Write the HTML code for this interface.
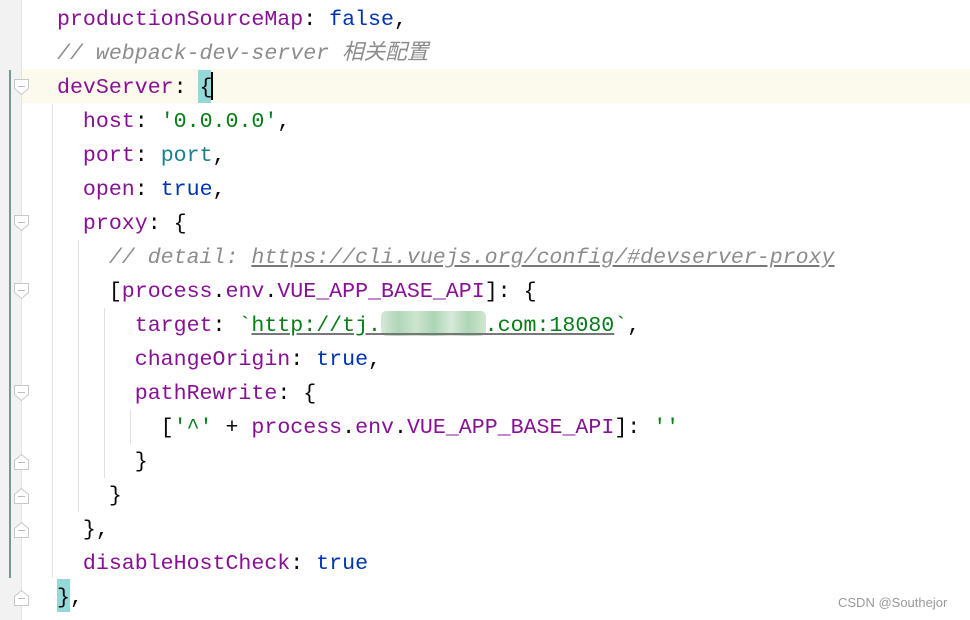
<!DOCTYPE html>
<html><head><meta charset="utf-8"><style>
body{margin:0;width:970px;height:620px;background:#fff;position:relative;overflow:hidden;font-family:"Liberation Mono","Noto Sans CJK SC",monospace;}
.g{position:absolute;left:0;top:0;width:21px;height:620px;background:#f2f2f2;border-right:1px solid #e4e4e4;}
.cl{position:absolute;left:22px;right:0;top:69px;height:34px;background:#fcfaed;}
.code{position:absolute;left:57px;top:3px;font-size:21.6px;line-height:34px;white-space:pre;color:#080808;}
.p{color:#871094}.c{color:#8c8c8c;font-style:italic}.k{color:#0033b3}.s{color:#067d17}.v{color:#1a7f8e}
.u{text-decoration:underline;text-decoration-color:#777}
.ig{position:absolute;width:1px;background:#e0e0e0}
.wm{position:absolute;left:838px;top:595px;font-family:"Liberation Sans",sans-serif;font-size:13px;color:#9a9a9a}
</style></head><body>
<div class="g"></div>
<div class="cl"></div>
<div style="position:absolute;left:9px;top:70px;width:2px;height:508px;background:#6f9a8f"></div>
<div class="ig" style="left:52px;top:104px;height:474px"></div>
<div class="ig" style="left:78px;top:240px;height:272px"></div>
<div class="ig" style="left:104px;top:308px;height:170px"></div>
<div class="ig" style="left:130px;top:410px;height:34px"></div>
<svg style="position:absolute;left:0;top:0" width="30" height="620">
<g fill="#fff" stroke="#c8c8c8" stroke-width="1">
<path d="M14.5 79.5h14v9l-7 6l-7-6z"/><path d="M14.5 215.5h14v9l-7 6l-7-6z"/><path d="M14.5 283.5h14v9l-7 6l-7-6z"/><path d="M14.5 385.5h14v9l-7 6l-7-6z"/>
<path d="M14.5 469.5h14v-9l-7-6l-7 6z"/><path d="M14.5 503.5h14v-9l-7-6l-7 6z"/><path d="M14.5 537.5h14v-9l-7-6l-7 6z"/><path d="M14.5 605.5h14v-9l-7-6l-7 6z"/>
</g>
<g stroke="#bbb"><path d="M18 86.5h7M18 222.5h7M18 290.5h7M18 392.5h7M18 462.5h7M18 496.5h7M18 530.5h7M18 598.5h7"/></g>
</svg>
<div style="position:absolute;left:198px;top:70px;width:13px;height:33px;background:#93d9d9"></div>
<div style="position:absolute;left:211px;top:72px;width:2px;height:28px;background:#000"></div>
<div style="position:absolute;left:57px;top:579px;width:13px;height:33px;background:#93d9d9"></div>
<div style="position:absolute;left:381px;top:311px;width:105px;height:25px;background:linear-gradient(90deg,#cfe6d3,#a9d1b0,#c7e2cb,#a3cfac,#d2e7d5,#a6d0ae,#cbe4ce);border-radius:5px;opacity:.9"></div>
<div class="code"><span class="p">productionSourceMap</span>: <span class="k">false</span>,
<span class="c">// webpack-dev-server 相关配置</span>
<span class="p">devServer</span>: {
  <span class="p">host</span>: <span class="s">'0.0.0.0'</span>,
  <span class="p">port</span>: <span class="v">port</span>,
  <span class="p">open</span>: <span class="k">true</span>,
  <span class="p">proxy</span>: {
    <span class="c">// detail: <span class="u">https://cli.vuejs.org/config/#devserver-proxy</span></span>
    [<span class="p">process</span>.<span class="p">env</span>.<span class="p">VUE_APP_BASE_API</span>]: {
      <span class="p">target</span>: <span class="s">`<span class="u">http://tj.        .com:18080</span>`</span>,
      <span class="p">changeOrigin</span>: <span class="k">true</span>,
      <span class="p">pathRewrite</span>: {
        [<span class="s">'^'</span> + <span class="p">process</span>.<span class="p">env</span>.<span class="p">VUE_APP_BASE_API</span>]: <span class="s">''</span>
      }
    }
  },
  <span class="p">disableHostCheck</span>: <span class="k">true</span>
},</div>
<div class="wm">CSDN @Southejor</div>
</body></html>
